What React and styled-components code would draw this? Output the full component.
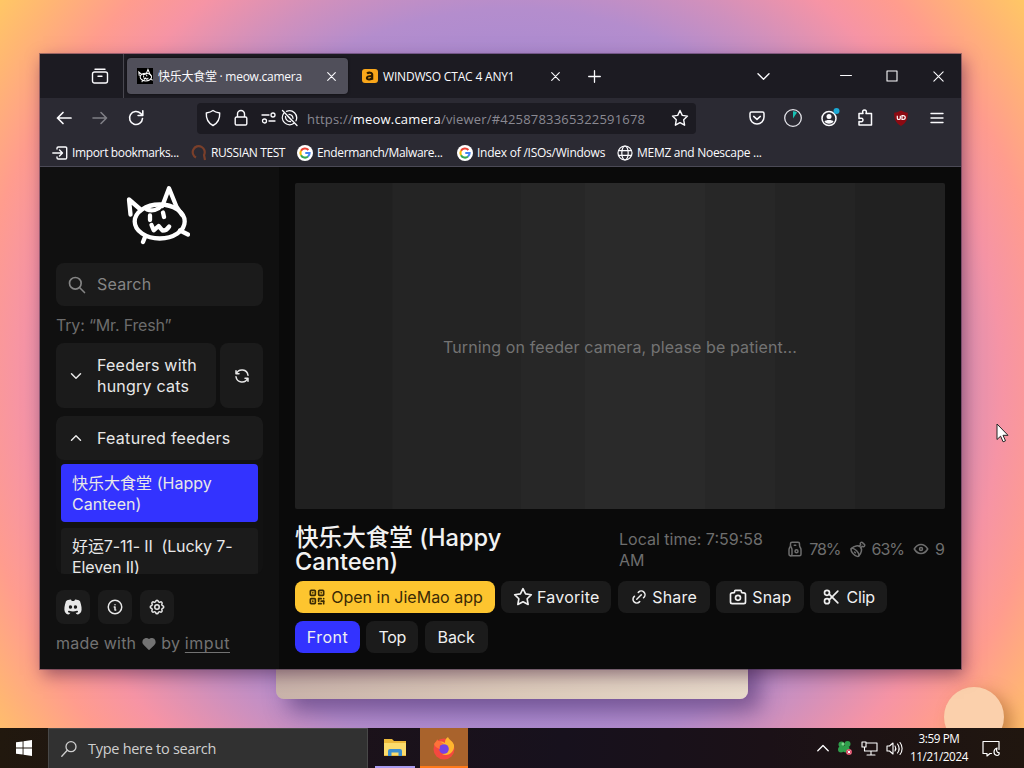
import React from "react";
import styled, { createGlobalStyle, css } from "styled-components";
import {
  TbSearch, TbChevronDown, TbChevronUp, TbRefresh, TbBrandDiscordFilled, TbInfoCircle,
  TbSettings, TbHeartFilled, TbQrcode, TbStar, TbLink, TbCamera, TbScissors, TbPaperBag, TbMeat, TbEye,
} from "react-icons/tb";

const Global = createGlobalStyle`
  * { box-sizing: border-box; }
  html, body { margin: 0; padding: 0; overflow: hidden; }
  svg { display: block; flex: none; }
`;

const ui = `"Open Sans", "Noto Sans CJK SC", sans-serif`;
const site = `Inter, "Noto Sans CJK SC", sans-serif`;

const Desktop = styled.div`
  position: relative;
  display: grid;
  grid-template-rows: 728px 40px;
  width: 1024px;
  height: 768px;
  overflow: hidden;
  background: radial-gradient(circle at 512px 384px, #a78ad2 300px, #b48dcd 375px, #cf90bd 425px, #f694a5 490px, #ff9c8e 540px, #ffb673 600px, #ffcb62 650px);
  font-family: ${ui};
`;
const Wallpaper = styled.div`
  position: relative;
`;
const Slab = styled.div`
  position: absolute;
  left: 276px;
  top: 600px;
  width: 472px;
  height: 99px;
  border-radius: 0 0 8px 8px;
  background: linear-gradient(90deg, #c9b3aa, #dbc9b9 50%, #e8dacb);
  box-shadow: 12px 12px 22px rgba(60, 30, 90, 0.5);
`;
const Ball = styled.div`
  position: absolute;
  left: 944px;
  top: 687px;
  width: 60px;
  height: 60px;
  border-radius: 50%;
  background: #fbd0ac;
  box-shadow: 8px 6px 16px rgba(150, 90, 30, 0.5);
`;
const Pointer = styled.svg`
  position: absolute;
  left: 996px;
  top: 423px;
`;
const Window = styled.section`
  position: absolute;
  left: 40px;
  top: 54px;
  width: 921px;
  height: 615px;
  display: grid;
  grid-template-rows: 44px 41px 28px 502px;
  background: #2b2a33;
  box-shadow: 0 0 0 1px rgba(60, 40, 70, 0.45), 3px 6px 16px rgba(60, 20, 50, 0.5);
`;
const Txt = styled.span`
  white-space: pre;
  letter-spacing: ${(p) => p.$ls || 0}px;
`;

const TabStrip = styled.div`
  display: flex;
  align-items: center;
  background: #1c1b22;
  color: #fbfbfe;
  font-size: 12px;
`;
const RecentTabs = styled.div`
  width: 84px;
  height: 44px;
  padding-left: 51px;
  display: flex;
  align-items: center;
  border-right: 1px solid #48474f;
`;
const Tab = styled.div`
  display: flex;
  align-items: center;
  height: 36px;
  width: ${(p) => p.$w}px;
  margin-left: 3px;
  padding: 0 ${(p) => (p.$active ? 12 : 8)}px 0 ${(p) => (p.$active ? 10 : 11)}px;
  border-radius: 4px;
  background: ${(p) => (p.$active ? "#504f5a" : "transparent")};
  box-shadow: ${(p) => (p.$active ? "0 0 3px rgba(0,0,0,.6)" : "none")};
`;
const TabTitle = styled(Txt)`
  flex: 1;
  margin-left: 5px;
`;
const StripGlyph = styled.div`
  display: flex;
  justify-content: center;
  width: ${(p) => p.$w}px;
  margin-left: ${(p) => p.$gap || 0}px;
`;

const NavBar = styled.div`
  display: flex;
  align-items: center;
  color: #fbfbfe;
  padding: 0 15px 1px;
`;
const NavButton = styled.div`
  width: 18px;
  margin-right: 18px;
  opacity: ${(p) => (p.$dim ? 0.4 : 1)};
`;
const UrlBar = styled.div`
  display: flex;
  align-items: center;
  width: 499px;
  height: 31px;
  margin-left: 34px;
  padding: 0 7px;
  border-radius: 4px;
  background: #1c1b22;
  font-size: 13px;
  color: #fbfbfe;
  gap: 10px;
`;
const Url = styled(Txt)`
  flex: 1;
  margin-left: -1px;
  padding-top: 1px;
  color: #8a8992;
`;
const Host = styled.span`
  color: #fbfbfe;
`;
const ToolIcons = styled.div`
  flex: 1;
  display: flex;
  justify-content: flex-end;
  gap: 18px;
`;

const Bookmarks = styled.div`
  display: flex;
  align-items: center;
  border-bottom: 1px solid #4b4a56;
  font-size: 12px;
  color: #fbfbfe;
  padding-left: 12px;
`;
const Bookmark = styled.div`
  display: flex;
  align-items: center;
  gap: 4px;
  width: ${(p) => p.$w}px;
`;

const Page = styled.div`
  display: grid;
  grid-template-columns: 239px 1fr;
  background: #0a0a0a;
  font-family: ${site};
  font-size: 16px;
  line-height: 21px;
  color: #e8e8e8;
`;
const Sidebar = styled.aside`
  background: #101010;
  padding: 16px 16px 0;
  display: flex;
  flex-direction: column;
`;
const Logo = styled.div`
  display: flex;
  justify-content: center;
  height: 80px;
  padding-right: 5px;
`;
const panel = css`
  background: #1b1b1b;
  border-radius: 8px;
`;
const SearchBox = styled.div`
  ${panel}
  display: flex;
  align-items: center;
  width: 207px;
  height: 43px;
  padding-left: 11px;
  gap: 10px;
  color: #858585;
`;
const Hint = styled.div`
  margin: 9px 0 7px;
  height: 21px;
  color: #6c6c6c;
`;
const HungryRow = styled.div`
  display: grid;
  grid-template-columns: 160px 43px;
  gap: 4px;
  height: 65px;
`;
const Toggle = styled.div`
  ${panel}
  display: flex;
  align-items: center;
  gap: 12px;
  padding-left: 11px;
`;
const RefreshButton = styled.div`
  ${panel}
  display: flex;
  align-items: center;
  justify-content: center;
`;
const Featured = styled.div`
  width: 207px;
  height: 158px;
  margin-top: 8px;
  border-radius: 8px;
  background: #121212;
  overflow: hidden;
`;
const FeaturedHead = styled(Toggle)`
  height: 44px;
  margin-bottom: 4px;
`;
const Feeder = styled.div`
  margin: 0 5px 6px;
  padding: ${(p) => (p.$active ? 9 : 8)}px 11px 0;
  height: 58px;
  border-radius: 4px;
  background: ${(p) => (p.$active ? "#3333ff" : "#1b1b1b")};
`;
const Socials = styled.div`
  display: flex;
  gap: 8px;
  margin-top: 16px;
`;
const Social = styled.div`
  ${panel}
  width: 34px;
  height: 34px;
  display: flex;
  align-items: center;
  justify-content: center;
`;
const Credit = styled.div`
  display: flex;
  align-items: center;
  gap: 4.5px;
  margin-top: 9px;
  color: #737373;
`;
const Underlined = styled(Txt)`
  text-decoration: underline;
  text-underline-offset: 3px;
`;

const Main = styled.main`
  padding: 16px 16px 0;
`;
const Video = styled.div`
  width: 650px;
  height: 326px;
  padding-top: 2px;
  display: flex;
  align-items: center;
  justify-content: center;
  border-radius: 2px;
  background: linear-gradient(90deg, #202020 0 97px, #242424 98px 226px, #272727 226px 290px, #2a2a2a 290px 410px, #272727 410px 480px, #242424 480px 560px, #212121 560px);
  color: #737373;
`;
const InfoRow = styled.div`
  display: grid;
  grid-template-columns: 324px 150px 1fr;
  align-items: center;
  height: 48px;
  margin-top: 17px;
  color: #6e6e6e;
`;
const Title = styled.h1`
  margin: 0;
  font-size: 23.6px;
  line-height: 24px;
  font-weight: 500;
  color: #f2f2f2;
`;
const Stats = styled.div`
  display: flex;
  justify-content: flex-end;
  gap: 8px;
  padding-bottom: 2px;
`;
const Stat = styled.div`
  display: flex;
  align-items: center;
  gap: 5px;
`;
const Actions = styled.div`
  display: flex;
  gap: 6.3px;
  margin-top: ${(p) => p.$top}px;
`;
const Action = styled.div`
  display: flex;
  align-items: center;
  justify-content: center;
  gap: 4px;
  width: ${(p) => p.$w}px;
  height: 32px;
  border-radius: 8px;
  color: ${(p) => (p.$tone === "gold" ? "#3b2a05" : "#f0f0f0")};
  background: ${(p) => ({ gold: "#fdc52f", blue: "#3333ff" }[p.$tone] || "#1b1b1b")};
`;

const Taskbar = styled.footer`
  position: relative;
  display: flex;
  align-items: center;
  background: linear-gradient(90deg, #21180e, #1c1219 30%, #17111d 55%, #1b1117 75%, #20160f);
  color: #fff;
`;
const Start = styled.div`
  width: 48px;
  padding-left: 16px;
`;
const TaskSearch = styled.div`
  width: 320px;
  height: 40px;
  display: flex;
  align-items: center;
  gap: 11px;
  padding-left: 12px;
  background: #313131;
  border: 1px solid #484848;
  border-bottom: 0;
  font-size: 14.5px;
  color: #cfcfcf;
`;
const TaskApp = styled.div`
  width: ${(p) => p.$w}px;
  height: 40px;
  margin-left: ${(p) => p.$gap || 0}px;
  display: flex;
  align-items: center;
  justify-content: center;
  background: ${(p) => (p.$active ? "#a9632c" : "transparent")};
  box-shadow: inset 0 -2px 0 ${(p) => (p.$active ? "#ff7a1a" : "#a99cf0")};
`;
const Tray = styled.div`
  flex: 1;
  display: flex;
  align-items: center;
  justify-content: flex-end;
  gap: 8px;
  padding-right: 24px;
`;
const Clock = styled.div`
  width: 56px;
  display: flex;
  justify-content: center;
  text-align: center;
  font-size: 11.7px;
  line-height: 18px;
  margin-right: 7px;
  padding-bottom: 2px;
`;

const Line = ({ s = 18, w = 1.4, vb = 18, children }) => (
  <svg width={s} height={s} viewBox={`0 0 ${vb} ${vb}`} fill="none" stroke="currentColor" strokeWidth={w} strokeLinecap="round" strokeLinejoin="round">{children}</svg>
);
const catPaths = (
  <>
    <ellipse cx="35.7" cy="38.500" rx="25" ry="17" />
    <path d="M6.500 31.500 5 16.500l11 9.500" />
    <path d="M38.300 23 45 5.300l7.500 18.500 5.500 8" />
    <path d="M23 26.500c5 2 11 .5 14-3.500M26 32.500v4.500M39 29.500l1 4.500M56 47.500l8 4M21 54l-2 5" />
    <path d="M27.500 42l2.200 5.300 4.900-4.300 4 4.700c3 0 5-1.700 6.600-4.200" />
  </>
);
const Cat = () => (
  <svg width="66" height="64" viewBox="0 0 66 64" fill="none" stroke="#fff" strokeWidth="4.300" strokeLinecap="round" strokeLinejoin="round">{catPaths}</svg>
);
const CatFavicon = () => (
  <svg width="16" height="16" viewBox="-3 -1 70 70">
    <rect x="-3" y="-1" width="70" height="70" fill="#000" />
    <g fill="none" stroke="#fff" strokeWidth="4.500" strokeLinecap="round">{catPaths}</g>
  </svg>
);
const Google = () => (
  <svg width="16" height="16" viewBox="0 0 16 16">
    <circle cx="8" cy="8" r="8" fill="#fff" />
    <g fill="none" strokeWidth="2.1">
      <path d="M11.4 5A4.6 4.6 0 0 0 4 5.8" stroke="#ea4335" />
      <path d="M4 5.8a4.6 4.6 0 0 0 0 4.5" stroke="#fbbc05" />
      <path d="M4 10.2a4.6 4.6 0 0 0 7 1.3" stroke="#34a853" />
      <path d="M11 11.5A4.6 4.6 0 0 0 12.6 8H8.3" stroke="#4285f4" />
    </g>
  </svg>
);
const Close = ({ s = 9, w = 1.1 }) => <Line s={s} vb={9} w={w}><path d="M.7.7l7.6 7.6M8.3.7.7 8.3" /></Line>;

function Chrome() {
  return (
    <>
      <TabStrip>
        <RecentTabs>
          <Line><path d="M4 2.2h10M3.5 5h11a2 2 0 0 1 2 2v7a2 2 0 0 1-2 2h-11a2 2 0 0 1-2-2V7a2 2 0 0 1 2-2zM7 9.3h4" /></Line>
        </RecentTabs>
        <Tab $active $w={221}>
          <CatFavicon />
          <TabTitle $ls={-0.26}>快乐大食堂 · meow.camera</TabTitle>
          <Close />
        </Tab>
        <Tab $w={217}>
          <svg width="16" height="16" viewBox="0 0 16 16"><rect y="1" width="16" height="14" rx="3" fill="#f9a61a" /><g fill="none" stroke="#2a1a00" strokeWidth="2.1"><path d="M5 5.6c1.5-1.4 5.2-1.4 5.2 1v5.2" /><path d="M10 8C7 8 4.9 8.400 4.900 10c0 2.200 4.500 2 5.200-.4" /></g></svg>
          <TabTitle $ls={-0.18}>WINDWSO CTAC 4 ANY1</TabTitle>
          <Close />
        </Tab>
        <StripGlyph $w={14} $gap={19}><Line s={13} vb={13} w={1.3}><path d="M6.500.7v11.600M.7 6.500h11.600" /></Line></StripGlyph>
        <StripGlyph $w={14} $gap={155}><Line s={13} vb={13} w={1.400}><path d="M1 3.800l5.500 5.400L12 3.800" /></Line></StripGlyph>
        <StripGlyph $w={12} $gap={70}><Line s={12} vb={12} w={1}><path d="M.5 5.500h11" /></Line></StripGlyph>
        <StripGlyph $w={12} $gap={34}><Line s={12} vb={12} w={1.100}><path d="M1 1h10v10H1z" /></Line></StripGlyph>
        <StripGlyph $w={12} $gap={34}><Close s={11} w={0.9} /></StripGlyph>
      </TabStrip>
      <NavBar>
        <NavButton><Line w={1.700}><path d="M16 9H2.500M8 3.500 2.500 9 8 14.500" /></Line></NavButton>
        <NavButton $dim><Line w={1.600}><path d="M2 9h13.500M10 3.500 15.500 9 10 14.500" /></Line></NavButton>
        <NavButton><Line w={1.600}><path d="M15.500 9.500A6.500 6.500 0 1 1 13.600 4.400l1.900 1.900M15.800 1.800v4.700h-4.700" /></Line></NavButton>
        <UrlBar>
          <Line w={1.400}><path d="M9 1.500c2 1.600 4.300 2.100 6.700 2.500C16 10 14 14 9 16.500 4 14 2 10 2.300 4 4.700 3.600 7 3.100 9 1.500z" /></Line>
          <Line w={1.400}><path d="M4.500 8h9a1.300 1.300 0 0 1 1.300 1.300v5.400a1.300 1.300 0 0 1-1.300 1.300h-9a1.300 1.300 0 0 1-1.300-1.300V9.300A1.300 1.300 0 0 1 4.500 8zM5.500 8V5a3.500 3.500 0 0 1 7 0v3" /></Line>
          <svg width="38" height="18" viewBox="0 0 38 18" fill="none" stroke="#fbfbfe" strokeWidth="1.300" strokeLinecap="round">
            <path d="M2 6h7M9 12h6" /><circle cx="13" cy="6" r="2" /><circle cx="4.500" cy="12" r="2" />
            <path d="M23.600 4.500a7.200 7.200 0 0 0 10 10M26.500 2.300a7.200 7.200 0 0 1 9.500 9.500M25.500 7.500a4.700 4.700 0 0 0 5 5M29 5.300a4.500 4.500 0 0 1 4 4M22.500 1.500l14.500 15M28 7.500l4 4" />
          </svg>
          <Url $ls={0.19}>https://<Host>meow.camera</Host>/viewer/#4258783365322591678</Url>
          <Line w={1.400}><path d="M9 1.500l2.300 4.900 5.200.7-3.800 3.700.9 5.400L9 13.600l-4.600 2.600.9-5.400L1.500 7.100l5.200-.7z" /></Line>
        </UrlBar>
        <ToolIcons>
          <Line w={1.500}><path d="M3.500 3h11a1.500 1.500 0 0 1 1.500 1.500V8a7 7 0 0 1-14 0V4.500A1.500 1.500 0 0 1 3.500 3zM5.700 7.400 9 10.400l3.300-3" /></Line>
          <svg width="18" height="18" viewBox="0 0 18 18"><circle cx="9" cy="9" r="8.300" fill="none" stroke="#e4e4ea" strokeWidth="1.300" /><path d="M9 9.500V2.200a6.500 6.500 0 0 1 4 1.200z" fill="#18c1b4" /></svg>
          <svg width="18" height="18" viewBox="0 0 18 18" overflow="visible"><circle cx="9" cy="9.500" r="7" fill="none" stroke="#fbfbfe" strokeWidth="1.500" /><circle cx="9" cy="7.500" r="2.500" fill="#fbfbfe" /><path d="M4.500 12.500c1-2 8-2 9 0-2 3-7 3-9 0z" fill="#fbfbfe" /><circle cx="16.500" cy="2" r="3" fill="#1aa9d6" /></svg>
          <Line w={1.500}><path d="M3 7V4.500h4C6 2.200 7 1 8.500 1S11 2.200 10 4.500h5.500V16H3v-3.500c3 1 4-.3 4-1.500s-1-2.500-4-1.500z" /></Line>
          <svg width="18" height="18" viewBox="0 0 18 18"><path d="M9 1.500c2 1.300 4.500 2 6.800 2.200.2 6-1.300 10.300-6.800 13.300C3.500 14 2 9.700 2.200 3.700 4.500 3.500 7 2.800 9 1.500z" fill="#8c0a12" /><path d="M5.300 6.700v2.500c0 1.700 3 1.700 3 0V6.700M10 6.700v3.800h1c3 0 3-3.800 0-3.800z" fill="none" stroke="#fff" strokeWidth="1.200" /></svg>
          <Line w={1.400}><path d="M3 4.500h12M3 9h12M3 13.500h12" /></Line>
        </ToolIcons>
      </NavBar>
      <Bookmarks>
        <Bookmark $w={139}>
          <Line s={16} vb={16} w={1.400}><path d="M5 4V3.200A1.200 1.200 0 0 1 6.200 2h7.300a1.200 1.200 0 0 1 1.200 1.200v9.600a1.200 1.200 0 0 1-1.200 1.200H6.200A1.200 1.200 0 0 1 5 12.800V12M.8 8h9.500M7.500 5l3 3-3 3" /></Line>
          <Txt $ls={-0.36}>Import bookmarks...</Txt>
        </Bookmark>
        <Bookmark $w={106}>
          <svg width="16" height="16" viewBox="0 0 16 16" fill="none" stroke="#7a3f2a" strokeWidth="2.200"><path d="M5 12.500A6 6 0 1 1 13 10l1 5" /></svg>
          <Txt $ls={-0.4}>RUSSIAN TEST</Txt>
        </Bookmark>
        <Bookmark $w={160}><Google /><Txt $ls={-0.37}>Endermanch/Malware...</Txt></Bookmark>
        <Bookmark $w={160}><Google /><Txt $ls={-0.24}>Index of /ISOs/Windows</Txt></Bookmark>
        <Bookmark $w={160}>
          <Line s={16} vb={16} w={1.200}><circle cx="8" cy="8" r="7" /><ellipse cx="8" cy="8" rx="3.200" ry="7" /><path d="M1.500 5.700h13M1.500 10.300h13" /></Line>
          <Txt $ls={-0.28}>MEMZ and Noescape ...</Txt>
        </Bookmark>
      </Bookmarks>
    </>
  );
}

function Site() {
  return (
    <Page>
      <Sidebar>
        <Logo><Cat /></Logo>
        <SearchBox><TbSearch size={20} /><Txt $ls={0.2}>Search</Txt></SearchBox>
        <Hint><Txt $ls={-0.17}>Try: “Mr. Fresh”</Txt></Hint>
        <HungryRow>
          <Toggle><TbChevronDown size={18} /><Txt $ls={0.22}>{"Feeders with\nhungry cats"}</Txt></Toggle>
          <RefreshButton><TbRefresh size={18} /></RefreshButton>
        </HungryRow>
        <Featured>
          <FeaturedHead><TbChevronUp size={18} /><Txt $ls={0.28}>Featured feeders</Txt></FeaturedHead>
          <Feeder $active><Txt $ls={0.03}>{"快乐大食堂 (Happy\nCanteen)"}</Txt></Feeder>
          <Feeder><Txt $ls={-0.12}>{"好运7-11- II  (Lucky 7-\nEleven II)"}</Txt></Feeder>
        </Featured>
        <Socials>
          <Social><TbBrandDiscordFilled size={20} /></Social>
          <Social><TbInfoCircle size={18} /></Social>
          <Social><TbSettings size={18} /></Social>
        </Socials>
        <Credit><Txt $ls={0.22}>made with</Txt><TbHeartFilled size={16} /><Txt $ls={0.3}>by</Txt><Underlined $ls={0.55}>imput</Underlined></Credit>
      </Sidebar>
      <Main>
        <Video><Txt $ls={0.11}>Turning on feeder camera, please be patient...</Txt></Video>
        <InfoRow>
          <Title><Txt>{"快乐大食堂 (Happy\nCanteen)"}</Txt></Title>
          <Txt>{"Local time: 7:59:58\nAM"}</Txt>
          <Stats>
            <Stat><TbPaperBag size={18} /><Txt $ls={-1}>78%</Txt></Stat>
            <Stat><TbMeat size={18} /><Txt $ls={-1}>63%</Txt></Stat>
            <Stat><TbEye size={18} /><Txt>9</Txt></Stat>
          </Stats>
        </InfoRow>
        <Actions $top={7}>
          <Action $tone="gold" $w={200}><TbQrcode size={20} /><Txt>Open in JieMao app</Txt></Action>
          <Action $w={110}><TbStar size={20} /><Txt $ls={0.24}>Favorite</Txt></Action>
          <Action $w={92}><TbLink size={18} /><Txt $ls={0.2}>Share</Txt></Action>
          <Action $w={88}><TbCamera size={20} /><Txt $ls={0.2}>Snap</Txt></Action>
          <Action $w={77}><TbScissors size={20} /><Txt $ls={-0.2}>Clip</Txt></Action>
        </Actions>
        <Actions $top={8}>
          <Action $tone="blue" $w={65}><Txt $ls={0.5}>Front</Txt></Action>
          <Action $w={52}><Txt $ls={-0.3}>Top</Txt></Action>
          <Action $w={63}><Txt>Back</Txt></Action>
        </Actions>
      </Main>
    </Page>
  );
}

export default function App() {
  return (
    <Desktop>
      <Global />
      <Wallpaper>
        <Slab />
        <Ball />
        <Window><Chrome /><Site /></Window>
        <Pointer width="13" height="20" viewBox="0 0 13 20"><path d="M1 1v15.500l3.600-3.300 2.500 5.600 2.400-1-2.500-5.500H12z" fill="#fff" stroke="#222" strokeWidth="1" /></Pointer>
      </Wallpaper>
      <Taskbar>
        <Start><svg width="16" height="16" viewBox="0 0 16 16" fill="#fff"><path d="M0 2.300 6.600 1.400v6.200H0zM7.500 1.300 16 0v7.600H7.500zM0 8.400h6.600v6.200L0 13.700zM7.500 8.400H16V16l-8.500-1.300z" /></svg></Start>
        <TaskSearch>
          <Line s={16} vb={16} w={1.300}><circle cx="10" cy="5.700" r="5" /><path d="M6.300 9.300.8 15.200" /></Line>
          <Txt $ls={-0.28}>Type here to search</Txt>
        </TaskSearch>
        <TaskApp $w={40} $gap={7}>
          <svg width="22" height="20" viewBox="0 0 22 20"><path d="M0 1h8l2 2h12v15H0z" fill="#ecb93a" /><path d="M0 5h22v12H0z" fill="#fbdc6c" /><path d="M4 18v-5a2 2 0 0 1 2-2h10a2 2 0 0 1 2 2v5h-3.500v-3.500h-7V18z" fill="#3b8ed0" /></svg>
        </TaskApp>
        <TaskApp $w={48} $gap={5} $active>
          <svg width="24" height="24" viewBox="0 0 24 24"><circle cx="12" cy="13" r="10.500" fill="#f4483f" /><path d="M3 8c2 2 6-1 10 2 3 3 1 8-3 8 6 3 13-2 12-9C21 5 17 4 16 1c-3 2-3 4-3 6C8 4 6 6 3 8z" fill="#ffb52e" /><circle cx="12" cy="13" r="4.800" fill="#7542e5" /><path d="M2 8c2-3 3-3 3-5 1 3 4 2 7 5-4 0-5 2-4 5-3-1-5-2-6-5z" fill="#ff7139" /></svg>
        </TaskApp>
        <Tray>
          <Line s={12} vb={12} w={1.300}><path d="M.8 8.800 6 3.500l5.200 5.300" /></Line>
          <svg width="16" height="16" viewBox="0 0 16 16"><g fill="#2f9e4b"><circle cx="4.500" cy="4.500" r="3" /><circle cx="10.500" cy="4" r="3" /><circle cx="4" cy="9.500" r="3" /><circle cx="9" cy="9" r="3.500" /></g><circle cx="6" cy="4" r="1.500" fill="#7fd48c" /><circle cx="12" cy="12" r="3" fill="#d9506a" /><path d="M10.700 10.700l2.600 2.600M13.300 10.700l-2.600 2.600" stroke="#fff" /></svg>
          <Line s={17} vb={17} w={1.100}><path d="M5 3h11v8H3.500V7M1 2h4v5H1zM10 11v4M6 15h8" /></Line>
          <Line s={17} vb={17} w={1.100}><path d="M1 6h2.500L7 3v11l-3.500-3H1zM9 6c1 1.500 1 3.500 0 5M11.500 4c2 2.700 2 6.300 0 9M14 2.500c2.800 3.500 2.800 8.500 0 12" /></Line>
          <Clock><Txt $ls={-0.42}>{"3:59 PM\n11/21/2024"}</Txt></Clock>
          <Line s={18} w={1.200}><path d="M1 2.500h16v8M1 2.500v12h4v2.500l3-2.500h1.500M15 9c-4 1.500-4 6.500 0 7.500 2 0 2.500-1.500 2-3-2 .5-3-2-2-4.500z" /></Line>
        </Tray>
      </Taskbar>
    </Desktop>
  );
}
